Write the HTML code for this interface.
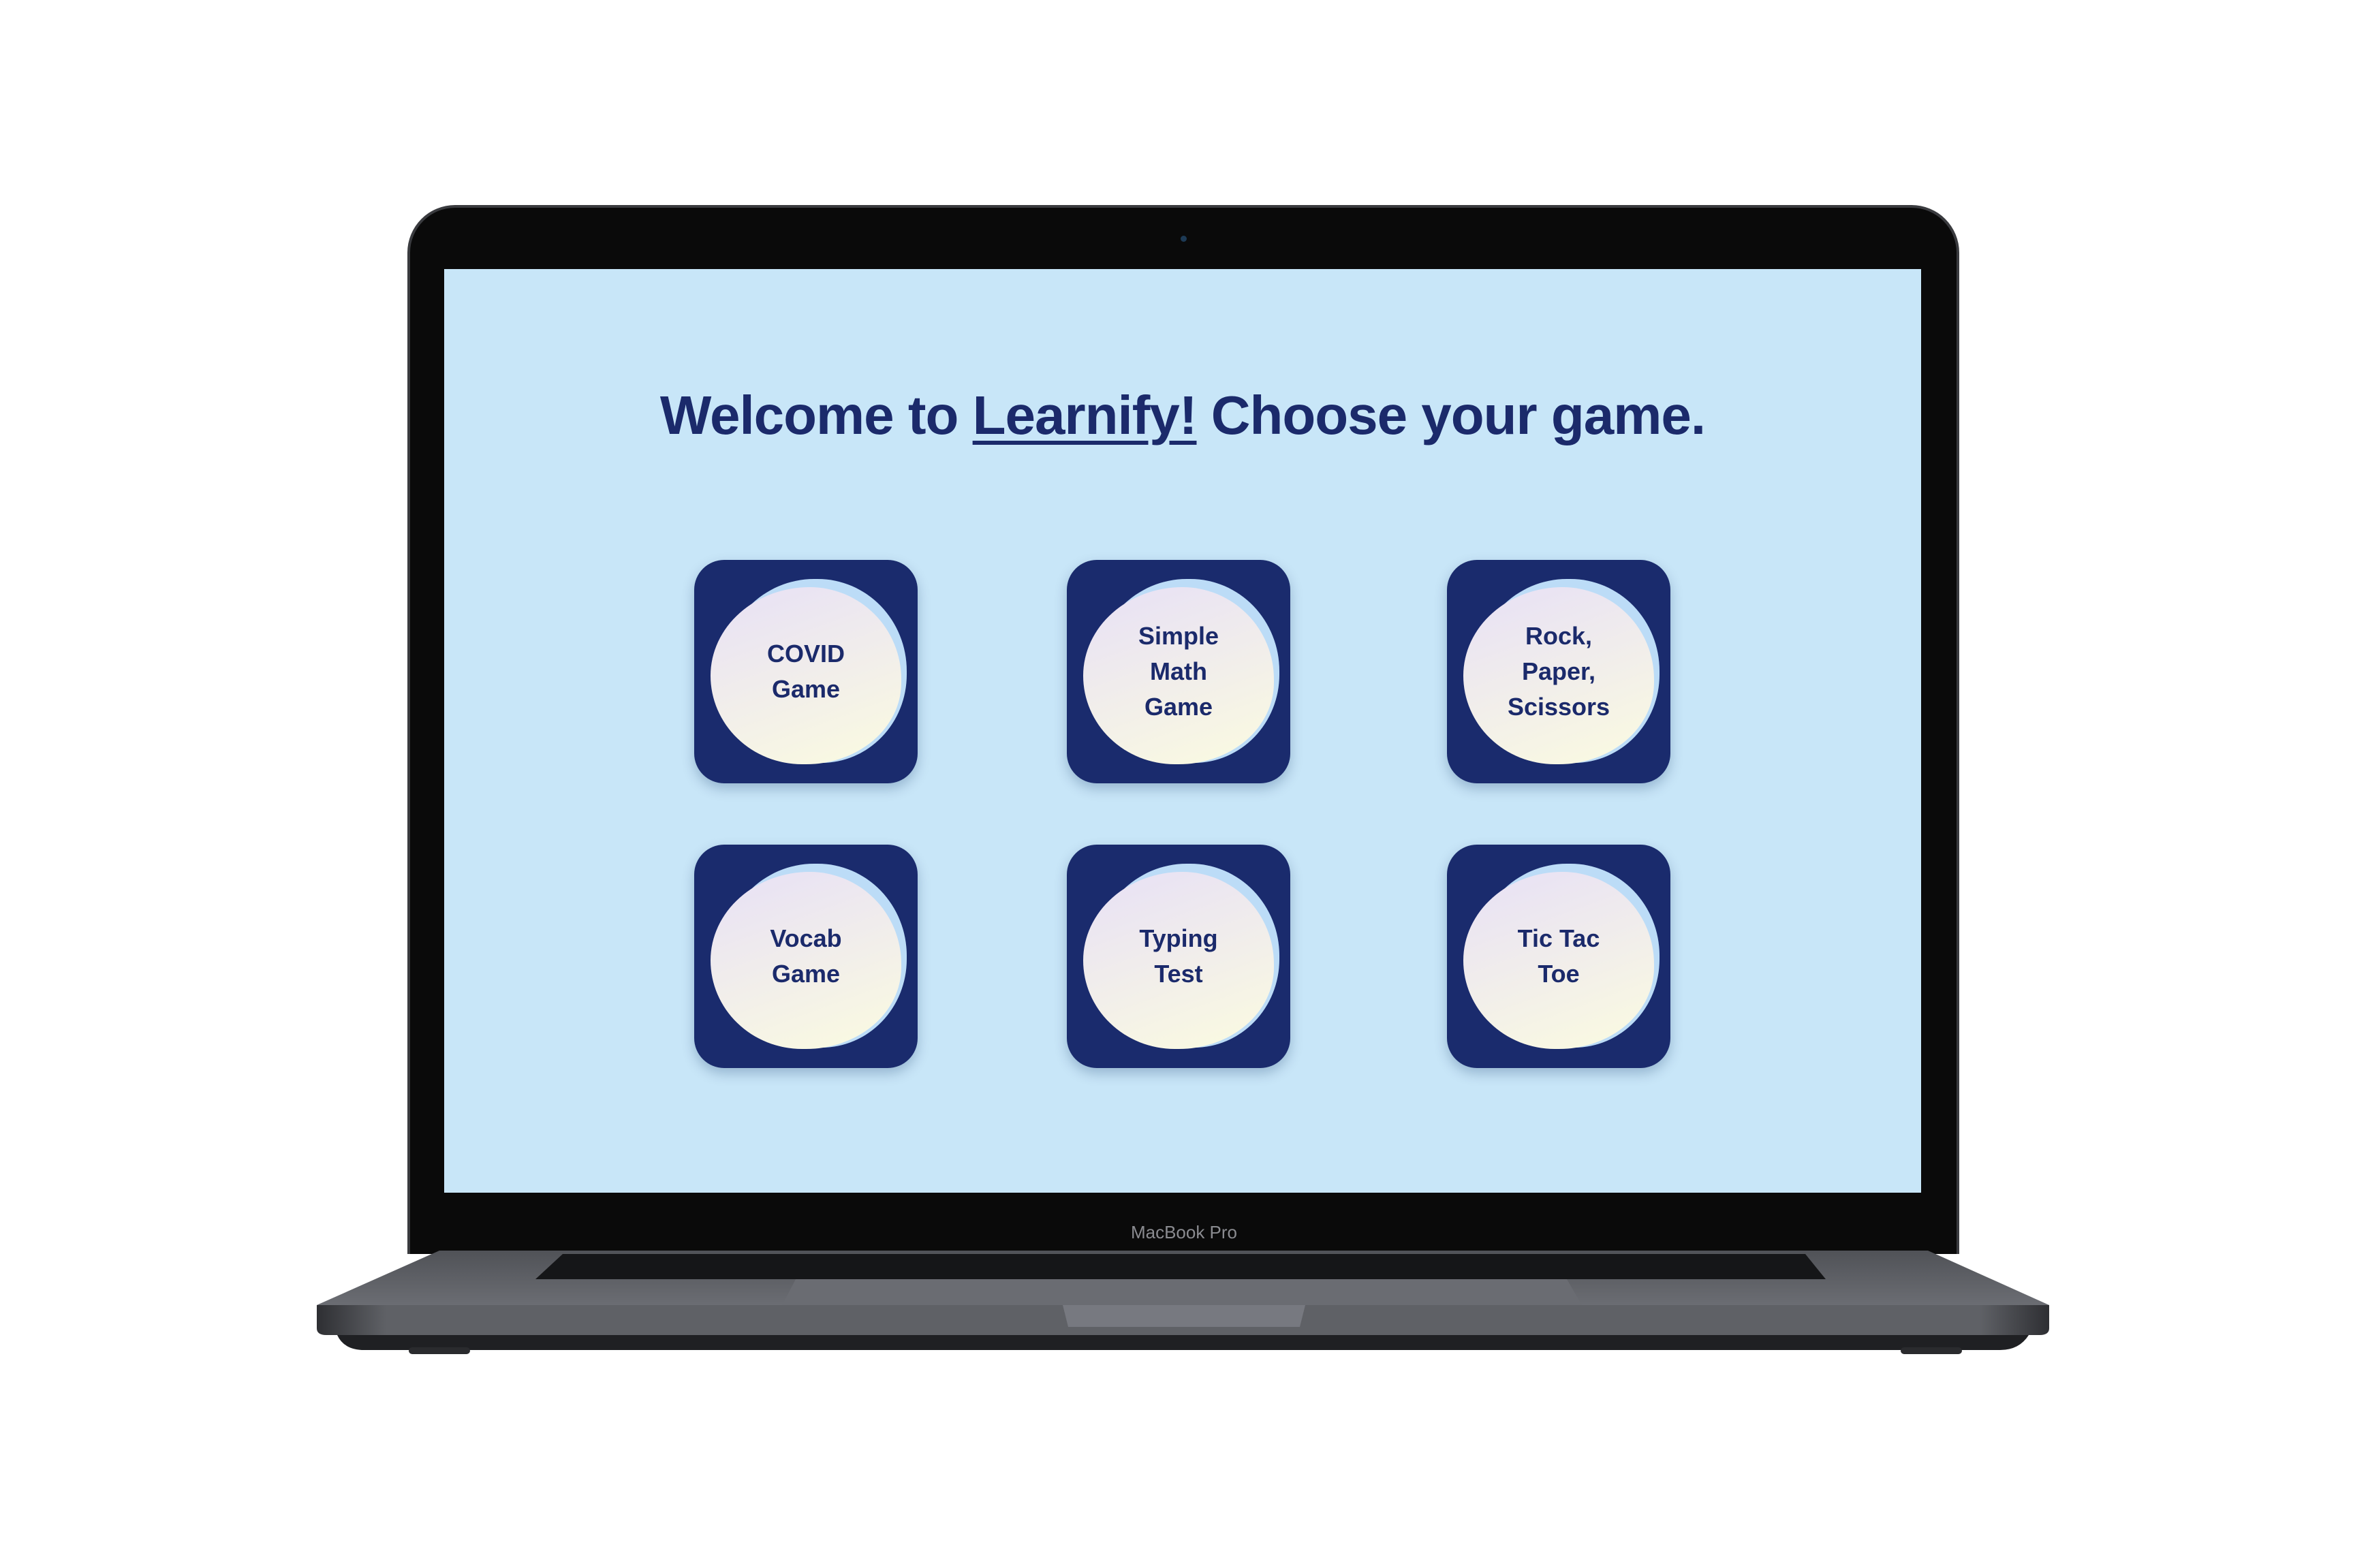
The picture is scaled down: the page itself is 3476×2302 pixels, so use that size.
<!DOCTYPE html>
<html><head><meta charset="utf-8"><style>
html,body{margin:0;padding:0;background:#fff;}
body{width:3476px;height:2302px;position:relative;overflow:hidden;font-family:"Liberation Sans",sans-serif;}
.abs{position:absolute;}
.lid{left:598px;top:301px;width:2278px;height:1540px;background:#0a0a0a;border-radius:70px 70px 0 0;border:4px solid #3a3b3f;border-bottom:none;box-sizing:border-box;}
.screen{left:652px;top:395px;width:2168px;height:1356px;background:#c8e6f8;}
.title{left:652px;width:2168px;top:564px;text-align:center;font-size:80px;font-weight:bold;color:#1b2a6b;letter-spacing:-1px;white-space:nowrap;}
.title u{text-decoration-thickness:6px;text-underline-offset:10px;}
.card{width:328px;height:328px;background:#1a2b6d;border-radius:44px;box-shadow:0 8px 18px rgba(0,40,90,.25);overflow:hidden;}
.b1{position:absolute;left:40px;top:28px;width:272px;height:270px;background:#bcdcf7;border-radius:50% 48% 46% 52%/52% 50% 48% 48%;}
.b2{position:absolute;left:24px;top:40px;width:280px;height:260px;background:linear-gradient(160deg,#e7e0f6,#fbfbe0);border-radius:52% 48% 50% 48%/50% 52% 46% 50%;}
.t{position:absolute;left:0;top:0;width:328px;height:328px;display:flex;align-items:center;justify-content:center;text-align:center;font-size:36px;font-weight:bold;line-height:52px;color:#1b2a6b;}
</style></head><body>
<div class="abs lid"></div>
<div class="abs" style="left:1733px;top:346px;width:9px;height:9px;border-radius:50%;background:#1d3a55;"></div>
<div class="abs screen"></div>
<div class="abs title">Welcome to <u>Learnify!</u> Choose your game.</div>

<div class="abs card" style="left:1019px;top:822px"><div class="b1"></div><div class="b2"></div><div class="t">COVID<br>Game</div></div>
<div class="abs card" style="left:1566px;top:822px"><div class="b1"></div><div class="b2"></div><div class="t">Simple<br>Math<br>Game</div></div>
<div class="abs card" style="left:2124px;top:822px"><div class="b1"></div><div class="b2"></div><div class="t">Rock,<br>Paper,<br>Scissors</div></div>
<div class="abs card" style="left:1019px;top:1240px"><div class="b1"></div><div class="b2"></div><div class="t">Vocab<br>Game</div></div>
<div class="abs card" style="left:1566px;top:1240px"><div class="b1"></div><div class="b2"></div><div class="t">Typing<br>Test</div></div>
<div class="abs card" style="left:2124px;top:1240px"><div class="b1"></div><div class="b2"></div><div class="t">Tic Tac<br>Toe</div></div>

<div class="abs" style="left:1590px;top:1794px;width:296px;text-align:center;font-size:26px;color:#8a8b90;">MacBook Pro</div>

<svg class="abs" style="left:0;top:0" width="3476" height="2302">
  <defs>
    <linearGradient id="top" x1="0" y1="0" x2="0" y2="1"><stop offset="0" stop-color="#505257"/><stop offset="1" stop-color="#6b6d73"/></linearGradient>
    <linearGradient id="front" x1="0" y1="0" x2="1" y2="0"><stop offset="0" stop-color="#2e2f33"/><stop offset=".04" stop-color="#5f6166"/><stop offset=".96" stop-color="#5f6166"/><stop offset="1" stop-color="#2e2f33"/></linearGradient>
  </defs>
  <polygon points="645,1836 2830,1836 3008,1916 465,1916" fill="url(#top)"/>
  <polygon points="826,1841 2650,1841 2680,1878 786,1878" fill="#151618"/>
  <polygon points="1168,1878 2300,1878 2322,1916 1148,1916" fill="#6a6c72"/>
  <path d="M465 1916 H3008 V1950 Q3008 1960 2994 1960 H479 Q465 1960 465 1950 Z" fill="url(#front)"/>
  <path d="M1560 1916 H1916 L1908 1948 H1568 Z" fill="#777980"/>
  <path d="M495 1960 H2978 Q2964 1982 2936 1982 H535 Q505 1982 495 1960 Z" fill="#1f2023"/>
  <rect x="600" y="1978" width="90" height="10" rx="5" fill="#2a2b2e"/>
  <rect x="2790" y="1978" width="90" height="10" rx="5" fill="#2a2b2e"/>
</svg>
</body></html>
